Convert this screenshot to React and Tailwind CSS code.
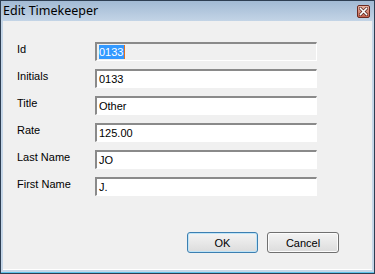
import React from 'react'

const fields = [
    { label: 'Id', value: '0133', readOnly: true },
    { label: 'Initials', value: '0133' },
    { label: 'Title', value: 'Other' },
    { label: 'Rate', value: '125.00' },
    { label: 'Last Name', value: 'JO' },
    { label: 'First Name', value: 'J.' },
]

function Field({ label, value, readOnly }) {
    return <div className="flex items-start h-[18px]">
        <div className="w-[78px] text-[11px] leading-[14px] text-black">{label}</div>
        <div className={"w-[222px] h-[19px] border-t-2 border-l-2 border-t-[#8a8a8a] border-l-[#8a8a8a] border-b border-r border-b-[#ffffff] border-r-[#ffffff] pl-[2px] pt-[1px] text-[11px] leading-[14px] text-black " + (readOnly ? "bg-[#f0f0f0]" : "bg-white")}>
            {readOnly
                ? <span className="inline-flex items-stretch"><span className="bg-[#3399ff] text-white pr-[1px]">{value}</span><span className="w-[1px] bg-[#e07020]"></span></span>
                : value}
        </div>
    </div>
}

export default function App() {
    return <div className="w-[375px] h-[274px] flex flex-col bg-[#c5d6e8] border border-[#2e3e52] font-['Liberation_Sans',Arial,sans-serif] overflow-hidden">
        <div className="h-[20px] flex items-center justify-between pl-[2px] pr-[4px] bg-gradient-to-b from-[#a2bad4] to-[#c3d4e6]">
            <span className="text-[12.5px] leading-[16px] text-black font-['Noto_Sans',sans-serif] -mt-[1px]">Edit Timekeeper</span>
            <div className="w-[13px] h-[13px] mt-[1px] rounded-[2px] border border-[#6b2a20] bg-gradient-to-b from-[#e8b4a4] to-[#c2604c] flex items-center justify-center">
                <svg width="9" height="9" viewBox="0 0 9 9">
                    <path d="M1.5 1.5 L7.5 7.5 M7.5 1.5 L1.5 7.5" stroke="#4a1a14" strokeWidth="3" strokeLinecap="square" />
                    <path d="M1.5 1.5 L7.5 7.5 M7.5 1.5 L1.5 7.5" stroke="#ffffff" strokeWidth="1.6" strokeLinecap="square" />
                </svg>
            </div>
        </div>
        <div className="flex-1 mx-[2px] mb-[2px] bg-[#f0f0f0] border-b border-[#ffffff] flex flex-col pt-[21px] pl-[14px]">
            <div className="flex flex-col gap-[9px]">
                {fields.map(f => <Field key={f.label} {...f} />)}
            </div>
            <div className="flex justify-end gap-[9px] mt-[37px] pr-[33px]">
                <button className="w-[71px] h-[21px] rounded-[3px] border border-[#3c7fb1] bg-gradient-to-b from-[#f4f4f4] to-[#dcdcdc] text-[11px] leading-[14px] text-black shadow-[inset_0_0_0_1px_#bfe4f7]">OK</button>
                <button className="w-[72px] h-[21px] rounded-[3px] border border-[#707070] bg-gradient-to-b from-[#f4f4f4] to-[#dcdcdc] text-[11px] leading-[14px] text-black shadow-[inset_0_0_0_1px_#fcfcfc]">Cancel</button>
            </div>
        </div>
        <div className="h-[1px] bg-[#5fc3ea]"></div>
    </div>
}
